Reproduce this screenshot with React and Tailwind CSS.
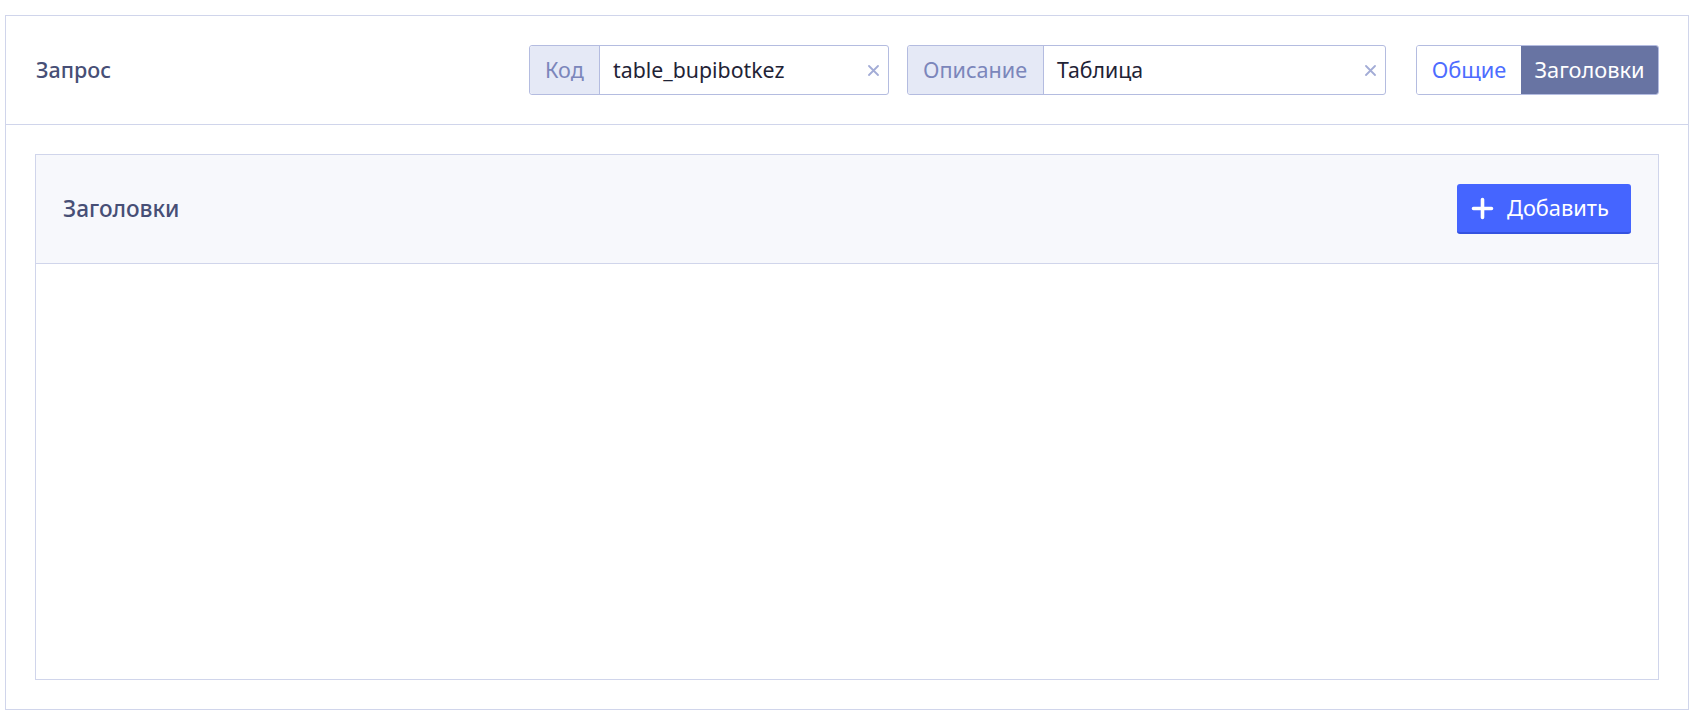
import React from "react";

function Field({ label, value, labelW, totalW }) {
  return (
    <div
      className={`flex h-[50px] items-stretch rounded-[3px] border border-[#b4bce0] bg-white ${totalW}`}
    >
      <div
        className={`flex items-center border-r border-[#b4bce0] bg-[#e5e9f6] pl-[15px] text-[21.6px] text-[#7b86bb] rounded-l-[3px] ${labelW}`}
      >
        {label}
      </div>
      <div className="flex flex-1 items-center pl-[13px] pr-[9px] text-[21.3px] text-[#1f2336]">
        <span className="flex-1">{value}</span>
        <svg width="11" height="11" viewBox="0 0 11 11">
          <path d="M1 1L10 10M10 1L1 10" stroke="#a3acd6" strokeWidth="1.8" strokeLinecap="round" />
        </svg>
      </div>
    </div>
  );
}

export default function App() {
  return (
    <div
      className="pt-[15px] pl-[5px]"
      style={{ fontFamily: '"Noto Sans", "Open Sans", sans-serif' }}
    >
      <div className="flex h-[695px] w-[1684px] flex-col border border-[#d0d5eb] bg-white">
        <div className="flex items-center border-b border-[#d0d5eb] px-[29px] py-[29px]">
          <div className="flex-1 pl-[1px] text-[21.5px] font-medium text-[#474f76]">Запрос</div>
          <Field label="Код" value="table_bupibotkez" labelW="w-[70px]" totalW="w-[360px]" />
          <div className="w-[18px]" />
          <Field label="Описание" value="Таблица" labelW="w-[136px]" totalW="w-[479px]" />
          <div className="w-[30px]" />
          <div className="flex h-[50px] w-[243px] overflow-hidden rounded-[3px] border border-[#b4bce0] text-[21.8px]">
            <div className="flex w-[104px] items-center justify-center bg-white text-[#4d6cff]">Общие</div>
            <div className="flex flex-1 items-center justify-center bg-[#6874a3] text-white">Заголовки</div>
          </div>
        </div>
        <div className="flex flex-1 flex-col p-[29px]">
          <div className="flex flex-1 flex-col border border-[#d0d5eb]">
            <div className="flex h-[109px] items-center justify-between border-b border-[#d0d5eb] bg-[#f7f8fc] pl-[27px] pr-[27px]">
              <div className="text-[22.6px] font-medium text-[#474f76]">Заголовки</div>
              <button className="flex h-[50px] w-[174px] items-center gap-[13px] rounded-[3px] border-b-2 border-[#3452e0] bg-[#4565ff] pl-[14px] text-[21.8px] text-white">
                <svg width="23" height="23" viewBox="0 0 23 23">
                  <path d="M11.5 2.5V20.5M2.5 11.5H20.5" stroke="white" strokeWidth="3.6" strokeLinecap="round" />
                </svg>
                <span>Добавить</span>
              </button>
            </div>
            <div className="flex-1 bg-white" />
          </div>
        </div>
      </div>
    </div>
  );
}
